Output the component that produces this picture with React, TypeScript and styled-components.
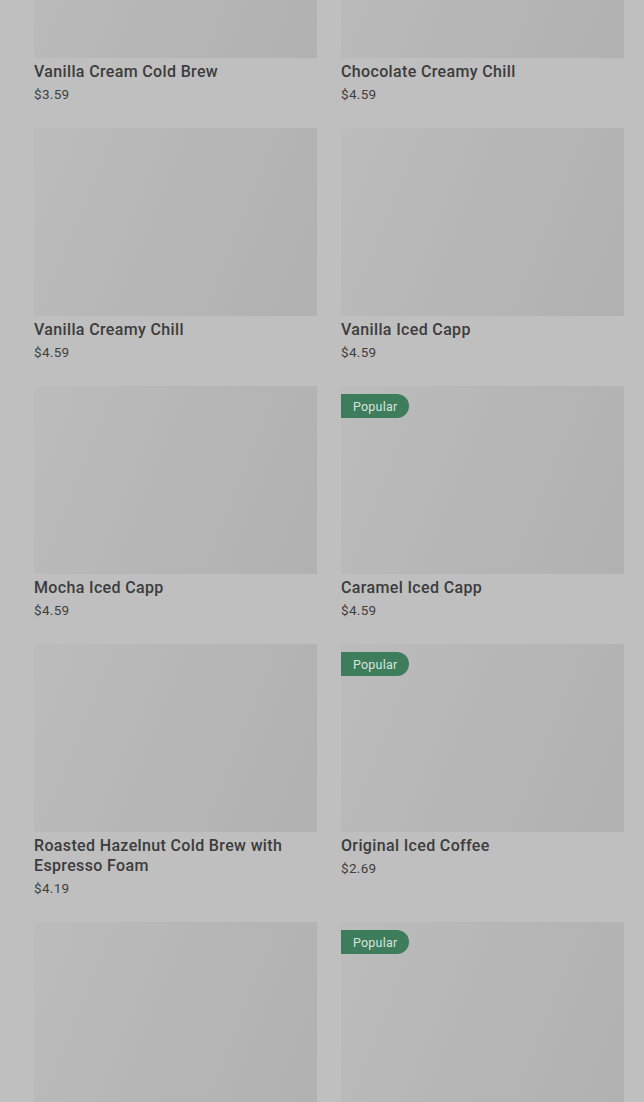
import React from "react";
import styled, { createGlobalStyle } from "styled-components";

const Global = createGlobalStyle`
  html, body {
    margin: 0;
    padding: 0;
    background: #bfbfbf;
    overflow: hidden;
    height: 100%;
  }
  body {
    font-family: Roboto, "Liberation Sans", Arial, sans-serif;
  }
`;

const Page = styled.div`
  height: 1102px;
  overflow: hidden;
  background: #bfbfbf;
`;

const Grid = styled.div`
  display: grid;
  grid-template-columns: 1fr 1fr;
  column-gap: 24px;
  row-gap: 25px;
  padding: 0 20px 0 34px;
  margin-top: -130px;
`;

const Card = styled.div`
  display: flex;
  flex-direction: column;
  min-width: 0;
`;

const ImageBox = styled.div`
  position: relative;
  height: 188px;
  background: linear-gradient(112deg, #bcbcbc 0%, #b7b7b7 40%, #b1b1b1 100%);
`;

const Badge = styled.span`
  position: absolute;
  top: 8px;
  left: 0;
  height: 24px;
  padding: 0 12px 0 12px;
  display: flex;
  align-items: center;
  background: #3e7d5c;
  color: #d6e3dc;
  font-size: 12.5px;
  font-weight: 400;
  letter-spacing: 0.2px;
  border-radius: 0 12px 12px 0;
`;

const Title = styled.div`
  margin-top: 4px;
  font-size: 16px;
  line-height: 20px;
  font-weight: 500;
  letter-spacing: 0.35px;
  color: #3c3c3c;
`;

const Price = styled.div`
  margin-top: 3px;
  font-size: 13.5px;
  line-height: 18px;
  letter-spacing: 0.3px;
  color: #404040;
`;

type Item = { name?: string; price?: string; popular?: boolean };

const items: Item[] = [
  { name: "Vanilla Cream Cold Brew", price: "$3.59" },
  { name: "Chocolate Creamy Chill", price: "$4.59" },
  { name: "Vanilla Creamy Chill", price: "$4.59" },
  { name: "Vanilla Iced Capp", price: "$4.59" },
  { name: "Mocha Iced Capp", price: "$4.59" },
  { name: "Caramel Iced Capp", price: "$4.59", popular: true },
  { name: "Roasted Hazelnut Cold Brew with Espresso Foam", price: "$4.19" },
  { name: "Original Iced Coffee", price: "$2.69", popular: true },
  {},
  { popular: true },
];

export default function App() {
  return (
    <Page>
      <Global />
      <Grid>
        {items.map((it, i) => (
          <Card key={i}>
            <ImageBox>{it.popular && <Badge>Popular</Badge>}</ImageBox>
            {it.name && <Title>{it.name}</Title>}
            {it.price && <Price>{it.price}</Price>}
          </Card>
        ))}
      </Grid>
    </Page>
  );
}
